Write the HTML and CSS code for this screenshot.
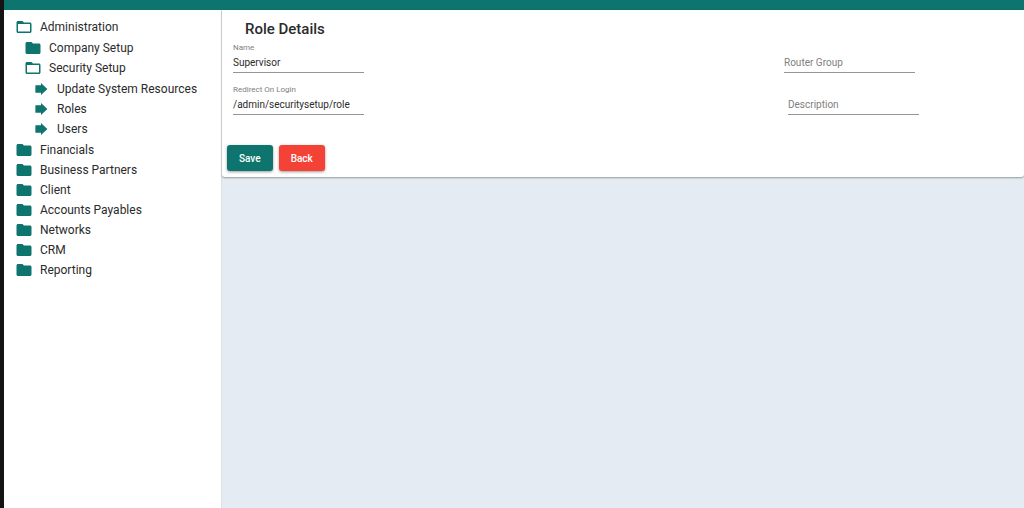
FILE: index.html
```html
<!DOCTYPE html>
<html lang="en">
<head>
    <meta charset="UTF-8">
    <meta name="viewport" content="width=device-width, initial-scale=1.0">
    <title>Role Details</title>
    <link rel="stylesheet" href="styles.css">
</head>
<body>
    <!-- icon shapes shared by the menu -->
    <svg class="icon-defs" aria-hidden="true">
        <symbol id="folder" viewBox="0 0 24 24">
            <path d="M10 4H4c-1.1 0-1.99.9-1.99 2L2 18c0 1.1.9 2 2 2h16c1.1 0 2-.9 2-2V8c0-1.1-.9-2-2-2h-8l-2-2z"/>
        </symbol>
        <symbol id="folder-open" viewBox="0 0 24 24">
            <path d="M20 6h-8l-2-2H4c-1.1 0-1.99.9-1.99 2L2 18c0 1.1.9 2 2 2h16c1.1 0 2-.9 2-2V8c0-1.1-.9-2-2-2zm0 12H4V8h16v10z"/>
        </symbol>
        <symbol id="arrow" viewBox="0 0 24 24">
            <path d="M4.500 7h7.500V4l8.500 8-8.500 8V17H4.500z"/>
        </symbol>
    </svg>

    <header class="topbar"></header>
    <div class="layout">
        <nav class="sidebar">
            <ul class="menu">
                <li>
                    <a href="#"><svg class="icon"><use href="#folder-open"/></svg>Administration</a>
                    <ul class="submenu">
                        <li><a href="#"><svg class="icon"><use href="#folder"/></svg>Company Setup</a></li>
                        <li>
                            <a href="#"><svg class="icon"><use href="#folder-open"/></svg>Security Setup</a>
                            <ul class="leaves">
                                <li><a href="#"><svg class="icon"><use href="#arrow"/></svg>Update System Resources</a></li>
                                <li><a href="#"><svg class="icon"><use href="#arrow"/></svg>Roles</a></li>
                                <li><a href="#"><svg class="icon"><use href="#arrow"/></svg>Users</a></li>
                            </ul>
                        </li>
                    </ul>
                </li>
                <li><a href="#"><svg class="icon"><use href="#folder"/></svg>Financials</a></li>
                <li><a href="#"><svg class="icon"><use href="#folder"/></svg>Business Partners</a></li>
                <li><a href="#"><svg class="icon"><use href="#folder"/></svg>Client</a></li>
                <li><a href="#"><svg class="icon"><use href="#folder"/></svg>Accounts Payables</a></li>
                <li><a href="#"><svg class="icon"><use href="#folder"/></svg>Networks</a></li>
                <li><a href="#"><svg class="icon"><use href="#folder"/></svg>CRM</a></li>
                <li><a href="#"><svg class="icon"><use href="#folder"/></svg>Reporting</a></li>
            </ul>
        </nav>

        <main class="content">
            <form class="card">
                <h1>Role Details</h1>
                <div class="row">
                    <div class="field">
                        <label for="name">Name</label>
                        <input type="text" id="name" value="Supervisor">
                    </div>
                    <div class="field">
                        <input type="text" id="routerGroup" aria-label="Router Group" placeholder="Router Group">
                    </div>
                </div>
                <div class="row row-wide">
                    <div class="field">
                        <label for="redirect">Redirect On Login</label>
                        <input type="text" id="redirect" value="/admin/securitysetup/role">
                    </div>
                    <div class="field">
                        <input type="text" id="description" aria-label="Description" placeholder="Description">
                    </div>
                </div>
                <div class="actions">
                    <button type="button" class="btn btn-save">Save</button>
                    <button type="button" class="btn btn-back">Back</button>
                </div>
            </form>
        </main>
    </div>
</body>
</html>
```
FILE: styles.css
```css
* {
    box-sizing: border-box;
}
body {
    display: flex;
    flex-direction: column;
    min-height: 100vh;
    margin: 0;
    border-left: 4px solid #141414;
    background: #e4ebf3;
    color: #2b2b2b;
    font-family: Roboto, "Liberation Sans", sans-serif;
    font-size: 12px;
}
.icon-defs {
    position: absolute;
    width: 0;
    height: 0;
}
.topbar {
    height: 10px;
    background: #0d756d;
}
.layout {
    display: flex;
    flex: 1;
}

/* sidebar */
.sidebar {
    flex: none;
    width: 218px;
    padding: 7px 11px;
    background: #fff;
    border-right: 1px solid #e0e0e0;
}
.sidebar ul {
    margin: 0;
    padding: 0;
    list-style: none;
}
.sidebar .submenu {
    padding: 1px 0 1px 9px;
}
.sidebar .leaves {
    padding: 1px 0 0 8px;
}
.sidebar a {
    display: flex;
    align-items: center;
    gap: 7px;
    height: 20px;
    color: inherit;
    text-decoration: none;
    white-space: nowrap;
}
.icon {
    flex: none;
    width: 18px;
    height: 18px;
    fill: #0d756d;
}

/* role form */
.content {
    flex: 1;
    min-width: 0;
}
.card {
    padding: 10px 0 6px;
    background: #fff;
    border-radius: 0 0 3px 3px;
    box-shadow: 0 1px 2px rgba(0, 0, 0, 0.35);
}
h1 {
    margin: 0;
    padding-left: 23px;
    font-size: 15px;
    font-weight: 500;
    line-height: 18px;
}
.row {
    display: grid;
    grid-template-columns: 1fr 240px;
    align-items: end;
    height: 42px;
    padding-left: 11px;
}
.row:first-of-type {
    height: 35px;
}
.row-wide {
    grid-template-columns: 1fr 236px;
}
.field {
    display: flex;
    flex-direction: column;
    width: 131px;
}
.field label {
    color: #808080;
    font-size: 8px;
    line-height: 10px;
}
.field input {
    width: 100%;
    height: 20px;
    padding: 0;
    border: 0;
    border-bottom: 1px solid #959595;
    background: none;
    color: inherit;
    font: inherit;
    font-size: 10px;
    outline: none;
}
.field input::placeholder {
    color: #808080;
    opacity: 1;
}
.actions {
    display: flex;
    gap: 6px;
    padding: 30px 5px 0;
}
.btn {
    height: 26px;
    padding: 0 12px;
    border: 0;
    border-radius: 3px;
    color: #fff;
    font: inherit;
    font-size: 10px;
    font-weight: 500;
    box-shadow: 0 1px 3px rgba(0, 0, 0, 0.4);
    cursor: pointer;
}
.btn-save {
    background: #0d756d;
}
.btn-back {
    background: #f44336;
}
```
